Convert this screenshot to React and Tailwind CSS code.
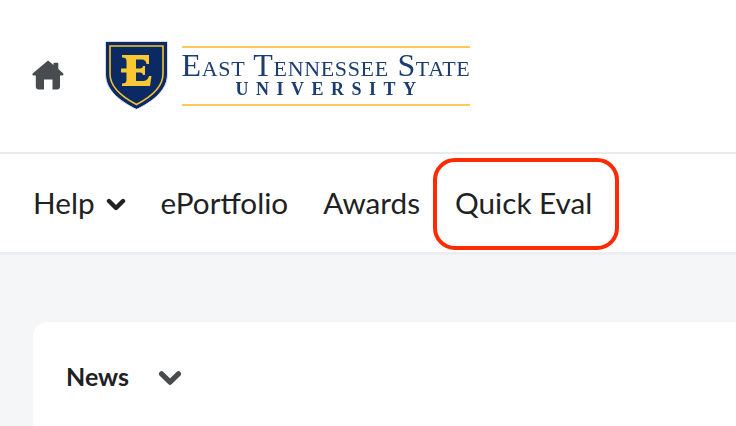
import React from "react";

function Home() {
  return (
    <svg width="32" height="30" viewBox="0 0 32 30" className="block">
      <path fill="#494c4e" d="M16 0.5 L21.5 5 V3.5 a0.8 0.8 0 0 1 .8 -.8 H25.5 a0.8 0.8 0 0 1 .8 .8 V9 L31 13.2 C31.9 14 31.5 15.4 30.2 15.4 H28 V26.5 A3 3 0 0 1 25 29.5 H20.5 V19.5 H12 V29.5 H6.8 A3 3 0 0 1 3.8 26.5 V15.4 H1.6 C.4 15.4 0 14 .9 13.2 Z" />
    </svg>
  );
}

function Shield() {
  return (
    <svg width="63" height="69" viewBox="0 0 63 69" className="block">
      <path fill="#0b2a63" d="M1 1 H62 V34 C62 50 46 61 31.5 68 C17 61 1 50 1 34 Z" />
      <path fill="none" stroke="#c9d3e2" strokeWidth="0.8" d="M.5 .5 H62.5 V34 C62.5 50 46 61.5 31.5 68.5 C17 61.5 .5 50 .5 34 Z" />
      <path fill="none" stroke="#f4c22f" strokeWidth="1.6" d="M5 5 H58 V33 C58 47 44 57 31.5 63.5 C19 57 5 47 5 33 Z" />
      <path fill="#f7c832" d="M17 14 H44 V23 H41.5 C41 20 39.5 18.5 37 18.5 H31 V27.5 H35 C37 27.5 37.8 26.5 38 25 H40 V34 H38 C37.8 32.5 37 31.5 35 31.5 H31 V40 H38 C41 40 43 38.5 44 35 H46.5 L45 45 H17 V42.5 C20 42.5 21.5 41.5 21.5 39 V31.5 H16 V27.5 H21.5 V20 C21.5 17.5 20 16.5 17 16.5 Z" />
    </svg>
  );
}

function Chevron({ color, className, width = 20, height = 13 }) {
  return (
    <svg width={width} height={height} viewBox="0 0 20 13" className={className}>
      <path d="M3 3 L10 10 L17 3" fill="none" stroke={color} strokeWidth="4.4" strokeLinecap="round" strokeLinejoin="round" />
    </svg>
  );
}

export default function App() {
  return (
    <div className="relative w-[736px] h-[426px] overflow-hidden bg-[#f5f6f8] font-['Lato',sans-serif] text-[#202122]">
      <header className="h-[154px] bg-white border-b-2 border-[#e9eaec] flex items-start">
        <div className="ml-[32px] mt-[60px]"><Home /></div>
        <div className="ml-[41px] mt-[41px]"><Shield /></div>
        <div className="ml-[14px] mt-[46px]">
          <div className="w-[288px] h-[60px] flex flex-col items-center border-y-2 border-[#fcc95a] text-[#1b3d72] font-['Liberation_Serif',serif] blur-[0.3px]">
            <div className="text-[32px] leading-[28px] mt-[3px] whitespace-nowrap [font-variant:small-caps] tracking-[0.65px]">East Tennessee State</div>
            <div className="text-[18px] leading-[17px] mt-[2px] font-bold whitespace-nowrap tracking-[7.5px] pl-[7px]">UNIVERSITY</div>
          </div>
        </div>
      </header>
      <nav className="h-[101px] bg-white border-b-[3px] border-[#eceef1] flex items-start pl-[33px] pt-[29px] text-[29.7px] leading-[39px]">
        <span>Help</span>
        <Chevron color="#202122" className="ml-[11px] mt-[15px]" />
        <span className="ml-[35px]">ePortfolio</span>
        <span className="ml-[35px]">Awards</span>
        <span className="ml-[35px]">Quick Eval</span>
      </nav>
      <main className="pt-[67px] pl-[33px]">
        <section className="h-[120px] bg-white rounded-tl-[14px] flex items-start pl-[33px] pt-[37px]">
          <h2 className="text-[25px] leading-[34px] font-bold">News</h2>
          <Chevron color="#494c4e" width={24} height={16} className="ml-[29px] mt-[11px]" />
        </section>
      </main>
      <div className="absolute left-[433px] top-[158px] w-[186px] h-[92px] border-[4px] border-[#ff2a00] rounded-[22px]" />
    </div>
  );
}
